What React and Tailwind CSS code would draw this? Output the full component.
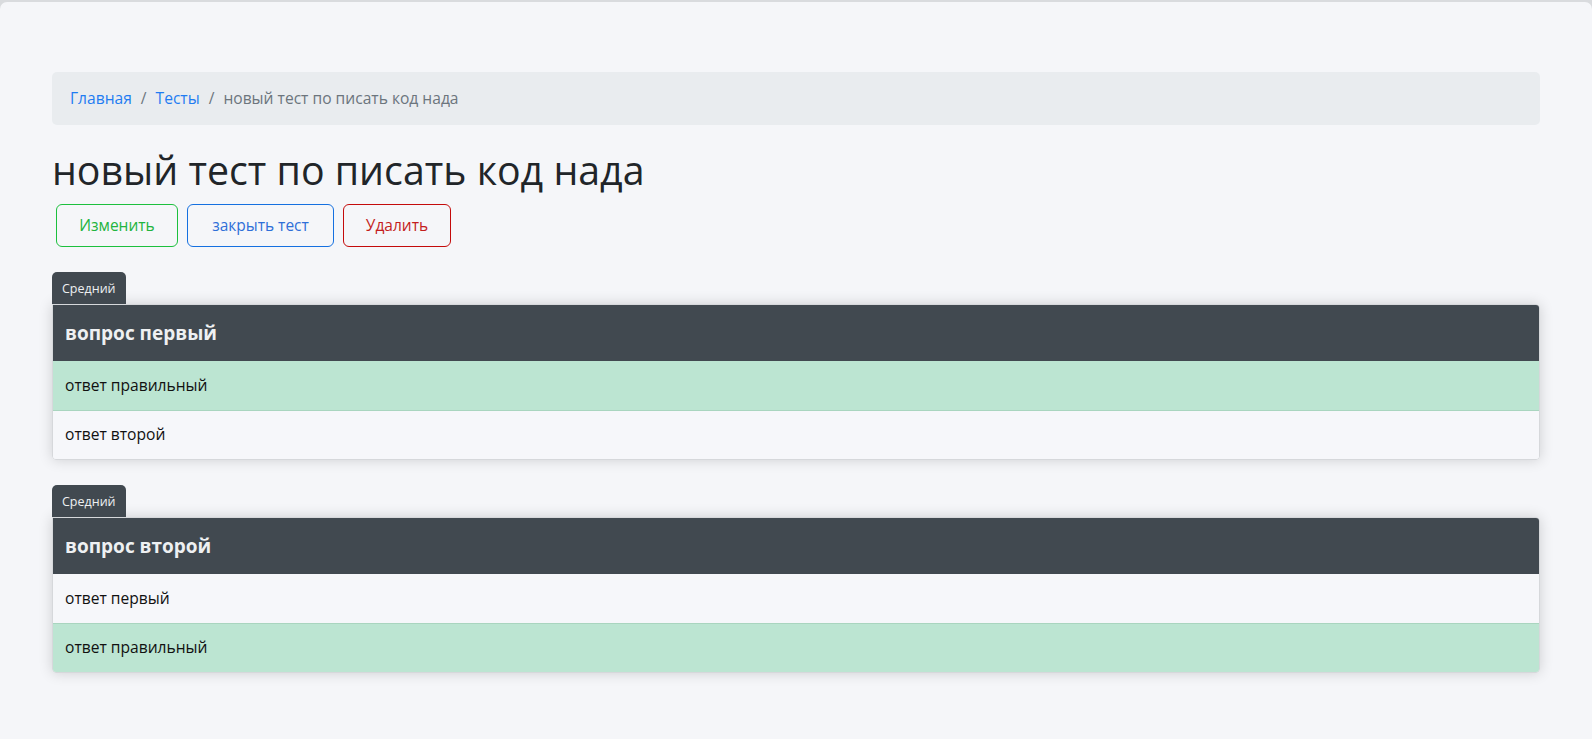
import React from 'react';

const FONT = { fontFamily: '"Open Sans", "Noto Sans", sans-serif' };

const QUESTIONS = [
  {
    title: 'вопрос первый',
    level: 'Средний',
    answers: [
      { text: 'ответ правильный', right: true },
      { text: 'ответ второй', right: false },
    ],
  },
  {
    title: 'вопрос второй',
    level: 'Средний',
    answers: [
      { text: 'ответ первый', right: false },
      { text: 'ответ правильный', right: true },
    ],
  },
];

const QuestionCard = ({ q }) => (
  <div className="mb-[25px]">
    <div className="inline-block rounded-t-[5px] bg-[#414950] px-[10px] pt-[8px] pb-[6px] text-[12.5px] leading-[18px] text-[#eef0f2]">
      {q.level}
    </div>
    <div className="overflow-hidden rounded-b-[4px] rounded-tr-[4px] border border-[#d6d8db] shadow-[0_0_14px_rgba(0,0,0,0.16)]">
      <div className="flex h-[56px] items-center bg-[#414950] px-[12px] text-[19px] font-bold text-[#eef0f2]">
        {q.title}
      </div>
      {q.answers.map((a, i) => (
        <div
          key={i}
          className={`flex h-[49px] items-center px-[12px] text-[15.6px] text-[#111] ${
            a.right ? 'bg-[#bce5d2]' : 'bg-[#f6f7fa]'
          } ${i > 0 ? 'border-t border-[#a9d5bf]' : ''}`}
        >
          {a.text}
        </div>
      ))}
    </div>
  </div>
);

export default function App() {
  return (
    <div className="min-h-screen w-full bg-[#d9dbde] pt-[2px]" style={FONT}>
      <div className="min-h-[737px] rounded-t-[7px] bg-[#f5f6f9] px-[52px] pt-[70px]">
        <nav className="flex h-[53px] items-center rounded-[5px] bg-[#e9ecef] px-[18px] text-[15.6px] text-[#6c757d]">
          <a className="text-[#1f7cf2]">Главная</a>
          <span className="px-[9px]">/</span>
          <a className="text-[#1f7cf2]">Тесты</a>
          <span className="px-[9px]">/</span>
          <span>новый тест по писать код нада</span>
        </nav>

        <h1 className="mt-[22px] text-[39.3px] leading-[46px] text-[#212529]">новый тест по писать код нада</h1>

        <div className="mt-[11px] flex gap-[9px] pl-[4px]">
          <button className="h-[43px] w-[122px] rounded-[6px] border border-[#1cc03e] text-[15.5px] text-[#22b43f]">Изменить</button>
          <button className="h-[43px] w-[147px] rounded-[6px] border border-[#1570e0] text-[15.5px] text-[#2f6fd8]">закрыть тест</button>
          <button className="h-[43px] w-[108px] rounded-[6px] border border-[#c40b0b] text-[15.5px] text-[#c41e1e]">Удалить</button>
        </div>

        <div className="mt-[25px]">
          {QUESTIONS.map((q, i) => (
            <QuestionCard key={i} q={q} />
          ))}
        </div>
      </div>
    </div>
  );
}
